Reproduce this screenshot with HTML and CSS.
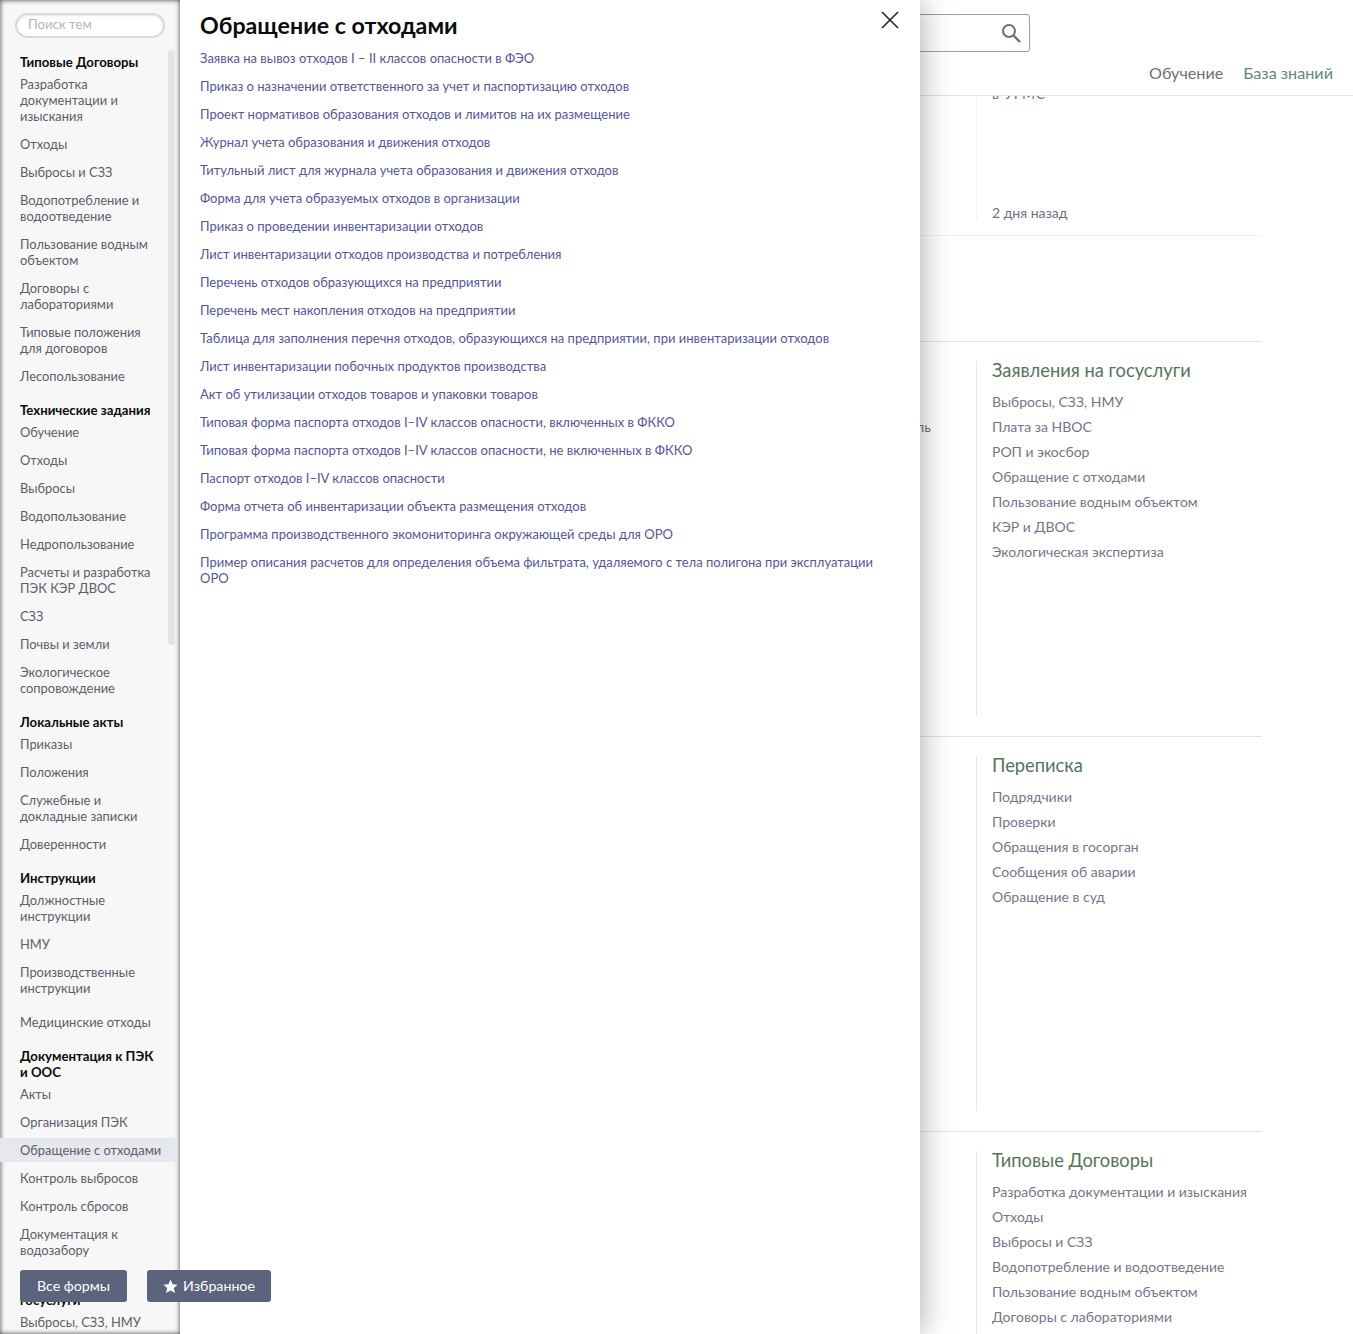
FILE: index.html
```html
<!DOCTYPE html>
<html lang="ru">
<head>
<meta charset="utf-8">
<title>Обращение с отходами</title>
<link rel="stylesheet" href="styles.css">
</head>
<body>
<div class="page">
  <header class="topbar">
    <div class="search"><svg class="search-icon" viewBox="0 0 20 20" width="20" height="20"><circle cx="8" cy="8" r="6" fill="none" stroke="#6b6f80" stroke-width="2"/><path d="M12.5 12.5 L19 19" stroke="#6b6f80" stroke-width="2.4" fill="none"/></svg></div>
    <nav class="topnav"><a class="nav-grey">Обучение</a><a class="nav-green">База знаний</a></nav>
  </header>
  <section class="row row-first">
    <div class="col col-first">
      <div class="cut">в УГМС</div>
      <div class="time">2 дня назад</div>
    </div>
  </section>
  <div class="rule rule-light"></div>
  <div class="rule rule-second"></div>
  <section class="row">
    <div class="col">
      <h3>Заявления на госуслуги</h3>
      <a>Выбросы, СЗЗ, НМУ</a><a>Плата за НВОС</a><a>РОП и экосбор</a><a>Обращение с отходами</a><a>Пользование водным объектом</a><a>КЭР и ДВОС</a><a>Экологическая экспертиза</a>
    </div>
    <span class="stray">ль</span>
  </section>
  <div class="rule"></div>
  <section class="row">
    <div class="col">
      <h3>Переписка</h3>
      <a>Подрядчики</a><a>Проверки</a><a>Обращения в госорган</a><a>Сообщения об аварии</a><a>Обращение в суд</a>
    </div>
  </section>
  <div class="rule"></div>
  <section class="row">
    <div class="col">
      <h3>Типовые Договоры</h3>
      <a>Разработка документации и изыскания</a><a>Отходы</a><a>Выбросы и СЗЗ</a><a>Водопотребление и водоотведение</a><a>Пользование водным объектом</a><a>Договоры с лабораториями</a>
    </div>
  </section>
</div>

<aside class="sidebar">
  <input class="topic-search" type="text" placeholder="Поиск тем">
  <div class="scrollbar"></div>
  <div class="group"><h4>Типовые Договоры</h4><a>Разработка документации и изыскания</a><a>Отходы</a><a>Выбросы и СЗЗ</a><a>Водопотребление и водоотведение</a><a>Пользование водным объектом</a><a>Договоры с лабораториями</a><a>Типовые положения для договоров</a><a>Лесопользование</a></div>
  <div class="group"><h4>Технические задания</h4><a>Обучение</a><a>Отходы</a><a>Выбросы</a><a>Водопользование</a><a>Недропользование</a><a>Расчеты и разработка ПЭК КЭР ДВОС</a><a>СЗЗ</a><a>Почвы и земли</a><a>Экологическое сопровождение</a></div>
  <div class="group"><h4>Локальные акты</h4><a>Приказы</a><a>Положения</a><a>Служебные и докладные записки</a><a>Доверенности</a></div>
  <div class="group"><h4>Инструкции</h4><a>Должностные инструкции</a><a>НМУ</a><a>Производственные инструкции</a></div>
  <div class="group group-tight"><a>Медицинские отходы</a></div>
  <div class="group"><h4>Документация к ПЭК и ООС</h4><a>Акты</a><a>Организация ПЭК</a><a class="active">Обращение с отходами</a><a>Контроль выбросов</a><a>Контроль сбросов</a><a>Документация к водозабору</a></div>
  <div class="group"><h4>Заявления на госуслуги</h4><a>Выбросы, СЗЗ, НМУ</a></div>
</aside>

<div class="float-buttons">
  <button class="fbtn fbtn-forms">Все формы</button>
  <button class="fbtn fbtn-fav"><svg viewBox="0 0 16 16" width="15" height="15"><path d="M8 .6l2.2 5 5.4.5-4.1 3.6 1.3 5.3L8 12.2 3.2 15l1.3-5.3L.4 6.1l5.4-.5z" fill="#fff"/></svg>Избранное</button>
</div>

<main class="panel">
  <button class="close" aria-label="Закрыть"><svg viewBox="0 0 18 18" width="18" height="18"><path d="M1 1L17 17M17 1L1 17" stroke="#222" stroke-width="1.6" fill="none"/></svg></button>
  <h1>Обращение с отходами</h1>
  <ul class="docs">
    <li>Заявка на вывоз отходов I – II классов опасности в ФЭО</li>
    <li>Приказ о назначении ответственного за учет и паспортизацию отходов</li>
    <li>Проект нормативов образования отходов и лимитов на их размещение</li>
    <li>Журнал учета образования и движения отходов</li>
    <li>Титульный лист для журнала учета образования и движения отходов</li>
    <li>Форма для учета образуемых отходов в организации</li>
    <li>Приказ о проведении инвентаризации отходов</li>
    <li>Лист инвентаризации отходов производства и потребления</li>
    <li>Перечень отходов образующихся на предприятии</li>
    <li>Перечень мест накопления отходов на предприятии</li>
    <li>Таблица для заполнения перечня отходов, образующихся на предприятии, при инвентаризации отходов</li>
    <li>Лист инвентаризации побочных продуктов производства</li>
    <li>Акт об утилизации отходов товаров и упаковки товаров</li>
    <li>Типовая форма паспорта отходов I–IV классов опасности, включенных в ФККО</li>
    <li>Типовая форма паспорта отходов I–IV классов опасности, не включенных в ФККО</li>
    <li>Паспорт отходов I–IV классов опасности</li>
    <li>Форма отчета об инвентаризации объекта размещения отходов</li>
    <li>Программа производственного экомониторинга окружающей среды для ОРО</li>
    <li>Пример описания расчетов для определения объема фильтрата, удаляемого с тела полигона при эксплуатации ОРО</li>
  </ul>
</main>
</body>
</html>
```
FILE: styles.css
```css
* { box-sizing: border-box; }
html, body { margin: 0; height: 1334px; overflow: hidden; background: #fff; }
body { font-family: Lato, "Open Sans", sans-serif; color: #6d7080; position: relative; }
.page { padding-top: 96px; height: 1334px; overflow: hidden; }
.topbar { position: absolute; left: 0; top: 0; right: 0; height: 96px; background: #fff; border-bottom: 1px solid #dfe1ea; z-index: 1; }
.search { position: absolute; left: 760px; top: 14px; width: 270px; height: 38px; border: 1px solid #9a9dad; border-radius: 3px; display: flex; justify-content: flex-end; align-items: center; padding-right: 8px; }
.topnav { position: absolute; right: 20px; top: 63px; display: flex; gap: 20px; font-size: 16.2px; line-height: 20px; }
.nav-grey { color: #6d7080; }
.nav-green { color: #5f8a78; }
.row { height: 394px; padding: 19px 0 0 976px; position: relative; }
.row-first { height: 124px; padding-top: 0; }
.col { height: 355px; border-left: 1px solid #e6e7ee; padding-left: 15px; display: flex; flex-direction: column; align-items: flex-start; }
.col-first { height: 125px; justify-content: space-between; border-left-color: #f0f1f5; }
.cut { font-size: 14px; line-height: 16px; margin-top: -10px; letter-spacing: .8px; }
.time { font-size: 14px; line-height: 16px; }
.col h3 { margin: -1px 0 9px; font-size: 18.3px; line-height: 20px; font-weight: 400; color: #55745c; }
.col a { font-size: 14px; line-height: 25px; color: #73768a; }
.rule { height: 1px; width: 1262px; background: #dfe1ea; }
.rule-light { margin-top: 15px; background: #f0f1f5; }
.rule-second { margin-top: 105px; }
.stray { position: absolute; left: 916px; top: 77px; font-size: 14px; line-height: 16px; }

.sidebar { position: absolute; left: 0; top: 0; width: 180px; height: 1334px; background: #f7f7f8; box-shadow: inset 0 0 5px rgba(0,0,0,.75); overflow: hidden; padding: 13px 4px 0 0; z-index: 2; font-size: 12.9px; line-height: 16px; }
.topic-search { display: block; margin: 0 0 16px 15px; width: 150px; height: 25px; border: 2px solid #d9d9d9; border-radius: 13px; background: #fff; padding: 0 12px 3px 11px; font: 13.2px Lato, sans-serif; box-shadow: inset 0 1px 2px rgba(0,0,0,.1); }
.topic-search::placeholder { color: #b5b5b5; }
.scrollbar { position: absolute; left: 168px; top: 50px; width: 7px; height: 595px; background: #e3e3e5; border-radius: 3px; }
.group { margin-bottom: 14px; position: relative; }
.group-tight { margin-top: -4px; }
.group h4 { margin: 0 0 2px; padding: 0 20px; font-size: 13.2px; line-height: 16px; font-weight: 700; color: #0b0b0b; }
.group a { display: block; padding: 4px 13px 4px 20px; margin: 0 0 4px; color: #5c5e68; }
.group a.active { background: #e6e8ee; }

.float-buttons { position: absolute; left: 20px; top: 1270px; display: flex; gap: 20px; z-index: 3; }
.fbtn { height: 32px; background: #5b637d; color: #fff; border: 0; border-radius: 3px; font: 14.2px/32px Lato, sans-serif; padding: 0; display: flex; align-items: center; justify-content: center; gap: 5px; }
.fbtn-forms { width: 107px; }
.fbtn-fav { width: 124px; }

.panel { position: absolute; left: 180px; top: 0; width: 740px; height: 1334px; background: #fff; padding: 11px 20px 0; box-shadow: 0 0 30px rgba(0,0,0,.35); clip-path: inset(0 -60px 0 0); z-index: 2; }
.panel h1 { margin: 0 0 10.5px; font-size: 23.2px; line-height: 28px; font-weight: 700; color: #0b0b0b; }
.close { position: absolute; left: 701px; top: 11px; width: 18px; height: 18px; padding: 0; background: none; border: 0; }
.docs { list-style: none; margin: 0; padding: 0 15px 0 0; }
.docs li { font-size: 13px; line-height: 16px; color: #55559a; margin-bottom: 12px; }
```
